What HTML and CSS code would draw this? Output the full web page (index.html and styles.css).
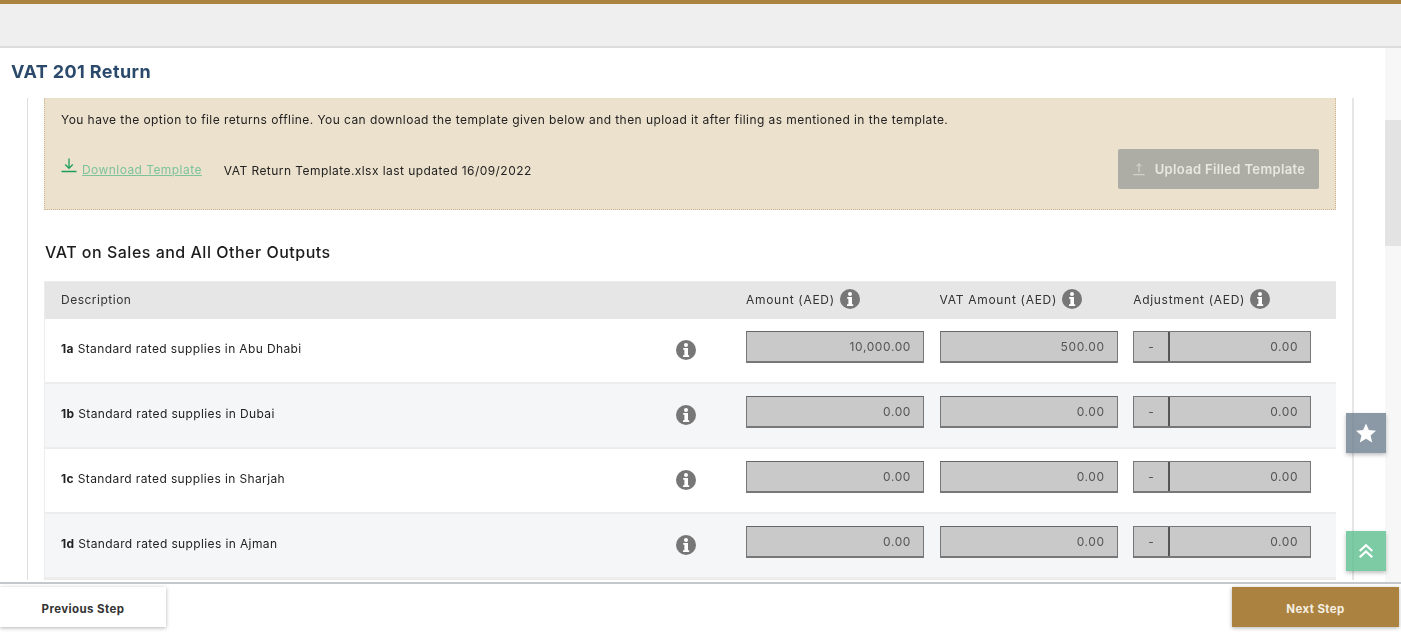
FILE: index.html
```html
<!DOCTYPE html>
<html lang="en">
<head>
<meta charset="utf-8">
<title>VAT 201 Return</title>
<link rel="stylesheet" href="styles.css">
</head>
<body>
<div class="app">
  <div class="topbar"></div>
  <div class="main">
    <div class="scroll-area">
      <h1 class="page-title">VAT 201 Return</h1>
      <div class="panel">
        <section class="banner">
          <p class="banner-text">You have the option to file returns offline. You can download the template given below and then upload it after filing as mentioned in the template.</p>
          <div class="banner-row">
            <a class="download" href="#">
              <svg class="dl-icon" viewBox="0 0 16 16" width="16" height="16"><path d="M8 0.5V10M4.2 6.5L8 10.3L11.8 6.5M0.5 13.5H15.5" fill="none" stroke="#1d9e5c" stroke-width="1.3"/></svg>
              <span class="download-label">Download Template</span>
            </a>
            <span class="updated">VAT Return Template.xlsx last updated 16/09/2022</span>
            <button class="upload">
              <svg viewBox="0 0 16 16" width="14" height="16"><path d="M8 2V12M5 5L8 2L11 5M1.5 14.5H14.5" fill="none" stroke="#e4e3dc" stroke-width="1"/></svg>
              <span>Upload Filled Template</span>
            </button>
          </div>
        </section>
        <h2 class="section-title">VAT on Sales and All Other Outputs</h2>
        <div class="table">
          <div class="row head">
            <div class="c-desc">Description</div>
            <div class="c-info"></div>
            <div class="c-val">Amount (AED) <svg class="i" viewBox="0 0 20 20"><use href="#info"/></svg></div>
            <div class="c-val">VAT Amount (AED) <svg class="i" viewBox="0 0 20 20"><use href="#info"/></svg></div>
            <div class="c-val">Adjustment (AED) <svg class="i" viewBox="0 0 20 20"><use href="#info"/></svg></div>
          </div>
          <div class="row body-row">
            <div class="c-desc"><b>1a</b> Standard rated supplies in Abu Dhabi</div>
            <div class="c-info"><svg class="i" viewBox="0 0 20 20"><use href="#info"/></svg></div>
            <div class="c-val"><div class="field">10,000.00</div></div>
            <div class="c-val"><div class="field">500.00</div></div>
            <div class="c-val"><div class="adj"><span class="sign">-</span><span class="adj-val">0.00</span></div></div>
          </div>
          <div class="row body-row alt">
            <div class="c-desc"><b>1b</b> Standard rated supplies in Dubai</div>
            <div class="c-info"><svg class="i" viewBox="0 0 20 20"><use href="#info"/></svg></div>
            <div class="c-val"><div class="field">0.00</div></div>
            <div class="c-val"><div class="field">0.00</div></div>
            <div class="c-val"><div class="adj"><span class="sign">-</span><span class="adj-val">0.00</span></div></div>
          </div>
          <div class="row body-row">
            <div class="c-desc"><b>1c</b> Standard rated supplies in Sharjah</div>
            <div class="c-info"><svg class="i" viewBox="0 0 20 20"><use href="#info"/></svg></div>
            <div class="c-val"><div class="field">0.00</div></div>
            <div class="c-val"><div class="field">0.00</div></div>
            <div class="c-val"><div class="adj"><span class="sign">-</span><span class="adj-val">0.00</span></div></div>
          </div>
          <div class="row body-row alt">
            <div class="c-desc"><b>1d</b> Standard rated supplies in Ajman</div>
            <div class="c-info"><svg class="i" viewBox="0 0 20 20"><use href="#info"/></svg></div>
            <div class="c-val"><div class="field">0.00</div></div>
            <div class="c-val"><div class="field">0.00</div></div>
            <div class="c-val"><div class="adj"><span class="sign">-</span><span class="adj-val">0.00</span></div></div>
          </div>
        </div>
      </div>
    </div>
    <div class="scrollbar"><div class="thumb"></div></div>
    <button class="float star" aria-label="Favourites">
      <svg viewBox="0 0 24 24" width="24" height="24"><path d="M12 2.5l2.9 6.6 7.1.7-5.4 4.7 1.6 7-6.2-3.7-6.2 3.7 1.6-7L2 9.8l7.1-.7z" fill="#fff"/></svg>
    </button>
    <button class="float up" aria-label="Back to top">
      <svg viewBox="0 0 20 20" width="18" height="18"><path d="M3 10L10 3.5L17 10M3 17L10 10.5L17 17" fill="none" stroke="#fff" stroke-width="2.4"/></svg>
    </button>
  </div>
  <div class="footer">
    <button class="btn prev">Previous Step</button>
    <button class="btn next">Next Step</button>
  </div>
</div>
<svg class="defs" width="0" height="0"><defs>
  <g id="info"><circle cx="10" cy="10" r="10" fill="#777"/><circle cx="10" cy="5" r="2" fill="#fff"/><path d="M7.2 8h4.8v7.2h1.2v1.8H7v-1.8h1.4V9.8H7.2z" fill="#fff"/></g>
</defs></svg>
</body>
</html>
```

FILE: styles.css
```css
* { box-sizing: border-box; }
html, body { margin: 0; height: 100%; overflow: hidden; }
body { font-family: Inter, "Liberation Sans", sans-serif; color: #222; background: #fff; }
.app { display: flex; flex-direction: column; height: 634px; filter: blur(0.45px); }
.topbar { height: 48px; flex: none; background: #efefef; border-top: 4px solid #ab8240; border-bottom: 2px solid #dcdcdc; }
.main { position: relative; flex: none; height: 534px; overflow: hidden; display: flex; }
.scroll-area { flex: 1; min-width: 0; overflow: hidden; }
.scrollbar { flex: none; width: 16px; background: #f7f7f7; padding-top: 72px; }
.thumb { height: 126px; background: #e3e3e3; }
.page-title { margin: 0; padding: 13px 0 0 11px; height: 50px; font-size: 18px; line-height: 21px; font-weight: 700; color: #2b4a6b; letter-spacing: .4px; }
.panel { margin: 0 31px 0 27px; padding: 0 16px; border-left: 1px solid #dedede; border-right: 2px solid #e6e6e6; }
.banner { height: 112px; background: #ece1cc; border: 1px dotted #c9b48c; border-top-color: #e6dcc6; padding: 13px 16px 0 16px; }
.banner-text { margin: 0; font-size: 12px; line-height: 16px; letter-spacing: .43px; color: #222; }
.banner-row { display: flex; align-items: center; margin-top: 21px; height: 40px; font-size: 12px; letter-spacing: .44px; }
.download { display: flex; align-items: center; gap: 5px; color: #7cc39c; margin-right: 22px; }
.dl-icon { margin-top: -6px; }
.download-label { text-decoration: underline; }
.updated { color: #222; margin-top: 3px; }
.upload { margin-left: auto; margin-right: 0; width: 201px; height: 40px; display: flex; align-items: center; justify-content: center; gap: 9px; background: #adada5; border: 0; border-radius: 2px; color: #e8e7e0; font: 600 13px Inter, sans-serif; letter-spacing: .35px; }
.section-title { margin: 0; padding-top: 32px; height: 71px; padding-left: 1px; font-size: 16px; line-height: 20px; font-weight: 500; color: #1c1c1c; letter-spacing: .5px; }
.table { border: 1px solid #ececec; border-right: 0; }
.row { display: flex; align-items: center; padding-left: 16px; }
.head { height: 37px; background: #e6e6e6; font-size: 12px; letter-spacing: .7px; color: #333; }
.head > div { margin-top: -3px; }
.head .c-desc { letter-spacing: .5px; }
.body-row { height: 65px; background: #fff; border-bottom: 2px solid #ededed; font-size: 12px; letter-spacing: .38px; color: #222; }
.body-row.alt { background: #f5f6f8; }
.body-row .c-desc { margin-top: -4px; }
.body-row .c-info { margin-top: -2px; }
.c-desc { flex: none; width: 615px; }
.c-info { flex: none; width: 70px; display: flex; }
.c-val { flex: none; width: 193.6px; display: flex; align-items: center; gap: 5px; }
.i { width: 20px; height: 20px; flex: none; }
.field { width: 178px; height: 32px; margin-top: -8px; background: #c9c9c9; border: 1px solid #777; border-top-color: #666; border-bottom-width: 2px; padding-right: 12px; display: flex; align-items: center; justify-content: flex-end; font-size: 12px; letter-spacing: .6px; color: #555; }
.adj { width: 178px; height: 32px; margin-top: -8px; display: flex; background: #c9c9c9; border: 1px solid #777; border-bottom-width: 2px; font-size: 12px; letter-spacing: .6px; color: #555; }
.sign { width: 36px; flex: none; text-align: center; line-height: 29px; border-right: 2px solid #555; }
.adj-val { flex: 1; text-align: right; padding-right: 12px; line-height: 29px; }
.footer { flex: none; height: 52px; background: #fff; border-top: 2px solid #c4c8cc; display: flex; justify-content: space-between; align-items: flex-start; padding: 3px 2px 0 0; }
.btn { height: 40px; border: 0; padding: 3px 0 0; font: 700 11.5px Inter, sans-serif; letter-spacing: .4px; box-shadow: 0 1px 4px rgba(0,0,0,.3); }
.prev { width: 166px; background: #fff; color: #333; }
.next { width: 167px; background: #ab8240; color: #f5efe2; }
.float { position: absolute; left: 1346px; width: 40px; height: 40px; border: 0; padding: 0; display: flex; align-items: center; justify-content: center; box-shadow: 0 2px 4px rgba(0,0,0,.25); }
.star { top: 365px; background: rgba(110,128,145,.8); }
.up { top: 483px; background: rgba(93,190,143,.8); }
.defs { position: absolute; }
```
